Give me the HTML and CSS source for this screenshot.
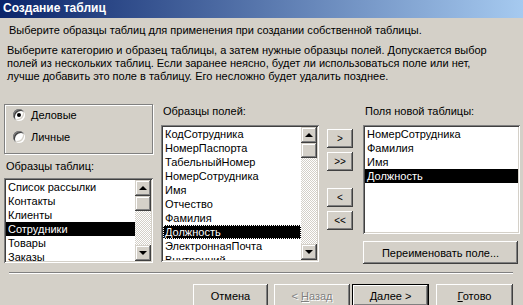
FILE: index.html
```html
<!DOCTYPE html>
<html lang="ru">
<head>
    <meta charset="UTF-8">
    <title>Создание таблиц</title>
    <link rel="stylesheet" href="styles.css">
</head>
<body>

<div class="dialog">
    <div class="titlebar">Создание таблиц</div>

    <p class="intro">Выберите образцы таблиц для применения при создании собственной таблицы.</p>
    <p class="hint">Выберите категорию и образец таблицы, а затем нужные образцы полей. Допускается выбор<br>
        полей из нескольких таблиц. Если заранее неясно, будет ли использоваться поле или нет,<br>
        лучше добавить это поле в таблицу. Его несложно будет удалить позднее.</p>

    <div class="main">
        <div class="col-left">
            <div class="group">
                <label class="opt"><span class="radio checked"></span>Деловые</label>
                <label class="opt"><span class="radio"></span>Личные</label>
            </div>
            <div class="caption cap-tables">Образцы таблиц:</div>
            <div class="listbox list-tables">
                <ul class="items">
                    <li>Список рассылки</li>
                    <li>Контакты</li>
                    <li>Клиенты</li>
                    <li class="sel">Сотрудники</li>
                    <li>Товары</li>
                    <li>Заказы</li>
                </ul>
                <div class="vscroll">
                    <div class="sbtn up"></div>
                    <div class="thumb"></div>
                    <div class="track"></div>
                    <div class="sbtn down"></div>
                </div>
            </div>
        </div>

        <div class="col-mid">
            <div class="caption">Образцы полей:</div>
            <div class="listbox list-fields">
                <ul class="items">
                    <li>КодСотрудника</li>
                    <li>НомерПаспорта</li>
                    <li>ТабельныйНомер</li>
                    <li>НомерСотрудника</li>
                    <li>Имя</li>
                    <li>Отчество</li>
                    <li>Фамилия</li>
                    <li class="sel focus">Должность</li>
                    <li>ЭлектроннаяПочта</li>
                    <li>Внутренний</li>
                </ul>
                <div class="vscroll">
                    <div class="sbtn up"></div>
                    <div class="thumb"></div>
                    <div class="track"></div>
                    <div class="sbtn down"></div>
                </div>
            </div>
        </div>

        <div class="col-btns">
            <button class="btn mv">&gt;</button>
            <button class="btn mv">&gt;&gt;</button>
            <button class="btn mv back">&lt;</button>
            <button class="btn mv">&lt;&lt;</button>
        </div>

        <div class="col-right">
            <div class="caption">Поля новой таблицы:</div>
            <div class="listbox list-new">
                <ul class="items">
                    <li>НомерСотрудника</li>
                    <li>Фамилия</li>
                    <li>Имя</li>
                    <li class="sel">Должность</li>
                </ul>
            </div>
            <button class="btn rename">Переименовать поле...</button>
        </div>
    </div>

    <div class="separator"></div>

    <div class="footer">
        <button class="btn wide cancel">Отмена</button>
        <button class="btn wide prev disabled">&lt; <u>Н</u>азад</button>
        <button class="btn wide next default"><u>Д</u>алее &gt;</button>
        <button class="btn wide finish"><u>Г</u>отово</button>
    </div>
</div>

</body>
</html>
```

FILE: styles.css
```css
body {
    margin: 0;
    width: 523px;
    height: 305px;
    overflow: hidden;
    background: #d4d0c8;
    font-family: "Liberation Sans", Arial, sans-serif;
    font-size: 11px;
    line-height: 13px;
    color: #000;
}
.titlebar {
    height: 18px;
    line-height: 17px;
    padding-left: 3px;
    background: linear-gradient(to right, #0a246a, #a6caf0);
    color: #fff;
    font-weight: bold;
    font-size: 12px;
}
.intro {
    margin: 6px 0 0 9px;
}
.hint {
    margin: 7px 0 0 7px;
    white-space: nowrap;
}
.main {
    display: flex;
    align-items: flex-start;
    margin-top: 21px;
    padding-left: 4px;
}
.col-left {
    width: 149px;
}
.col-mid {
    width: 158px;
    margin-left: 8px;
    padding-top: 1px;
}
.col-btns {
    width: 26px;
    margin-left: 8px;
    padding-top: 25px;
    display: flex;
    flex-direction: column;
}
.col-right {
    width: 157px;
    margin-left: 10px;
    padding-top: 1px;
}

/* group box with radios */
.group {
    border: 1px solid #808080;
    box-shadow: inset 1px 1px #fff, 1px 1px #fff;
    padding: 2px 0 0 8px;
    height: 46px;
}
.opt {
    display: flex;
    align-items: center;
    height: 16px;
    margin-bottom: 6px;
}
.radio {
    position: relative;
    width: 12px;
    height: 12px;
    border-radius: 50%;
    background: #fff;
    box-shadow: inset 1px 1px #808080, inset -1px -1px #fff, inset 2px 2px #404040, inset -2px -2px #d4d0c8;
    margin-right: 6px;
}
.radio.checked::after {
    content: "";
    position: absolute;
    left: 4px;
    top: 4px;
    width: 4px;
    height: 4px;
    border-radius: 50%;
    background: #000;
}

.caption {
    height: 13px;
    padding-left: 2px;
}
.cap-tables {
    margin-top: 6px;
}

/* list boxes */
.listbox {
    display: flex;
    background: #fff;
    padding: 2px;
    box-shadow: inset 1px 1px #808080, inset -1px -1px #fff, inset 2px 2px #404040, inset -2px -2px #d4d0c8;
    overflow: hidden;
}
.list-tables {
    height: 81px;
    margin-top: 5px;
}
.list-fields {
    height: 133px;
    margin-top: 7px;
}
.list-new {
    height: 105px;
    margin-top: 7px;
}
.items {
    flex: 1;
    list-style: none;
    margin: 0;
    padding: 0;
    overflow: hidden;
}
.items li {
    height: 14px;
    line-height: 14px;
    padding-left: 2px;
    white-space: nowrap;
}
.items li.sel {
    background: #000;
    color: #fff;
}
.items li.focus {
    outline: 1px dotted #fff;
    outline-offset: -1px;
}

/* scrollbar */
.vscroll {
    width: 16px;
    display: flex;
    flex-direction: column;
}
.sbtn, .thumb {
    height: 16px;
    background: #d4d0c8;
    box-shadow: inset -1px -1px #404040, inset 1px 1px #d4d0c8, inset -2px -2px #808080, inset 2px 2px #fff;
    position: relative;
}
.thumb {
    height: 15px;
}
.track {
    flex: 1;
    background: repeating-conic-gradient(#d4d0c8 0 25%, #fff 0 50%) 0 0 / 2px 2px;
}
.sbtn::after {
    content: "";
    position: absolute;
    left: 4px;
    top: 6px;
    border-left: 4px solid transparent;
    border-right: 4px solid transparent;
}
.sbtn.up::after {
    border-bottom: 4px solid #000;
}
.sbtn.down::after {
    border-top: 4px solid #000;
}

/* buttons */
.btn {
    font-family: inherit;
    font-size: 11px;
    color: #000;
    background: #d4d0c8;
    border: none;
    padding: 0;
    box-shadow: inset -1px -1px #404040, inset 1px 1px #fff, inset -2px -2px #808080, inset 2px 2px #d4d0c8;
}
.btn.mv {
    height: 19px;
    margin-bottom: 4px;
    font-size: 10px;
}
.btn.back {
    margin-top: 13px;
}
.btn.rename {
    width: 155px;
    height: 23px;
    margin-top: 7px;
}
.separator {
    margin: 8px 10px 0 9px;
    border-top: 1px solid #808080;
    border-bottom: 1px solid #fff;
}
.footer {
    display: flex;
    justify-content: flex-end;
    padding-right: 10px;
    margin-top: 10px;
}
.btn.wide {
    width: 76px;
    height: 23px;
}
.btn.cancel {
    width: 75px;
}
.btn.prev {
    margin-left: 6px;
}
.btn.next {
    margin-left: 2px;
    width: 77px;
    box-shadow: inset 0 0 0 1px #000, inset -2px -2px #404040, inset 2px 2px #fff, inset -3px -3px #808080;
}
.btn.finish {
    margin-left: 7px;
    width: 77px;
}
.btn.disabled {
    color: #808080;
    text-shadow: 1px 1px #fff;
}
```
